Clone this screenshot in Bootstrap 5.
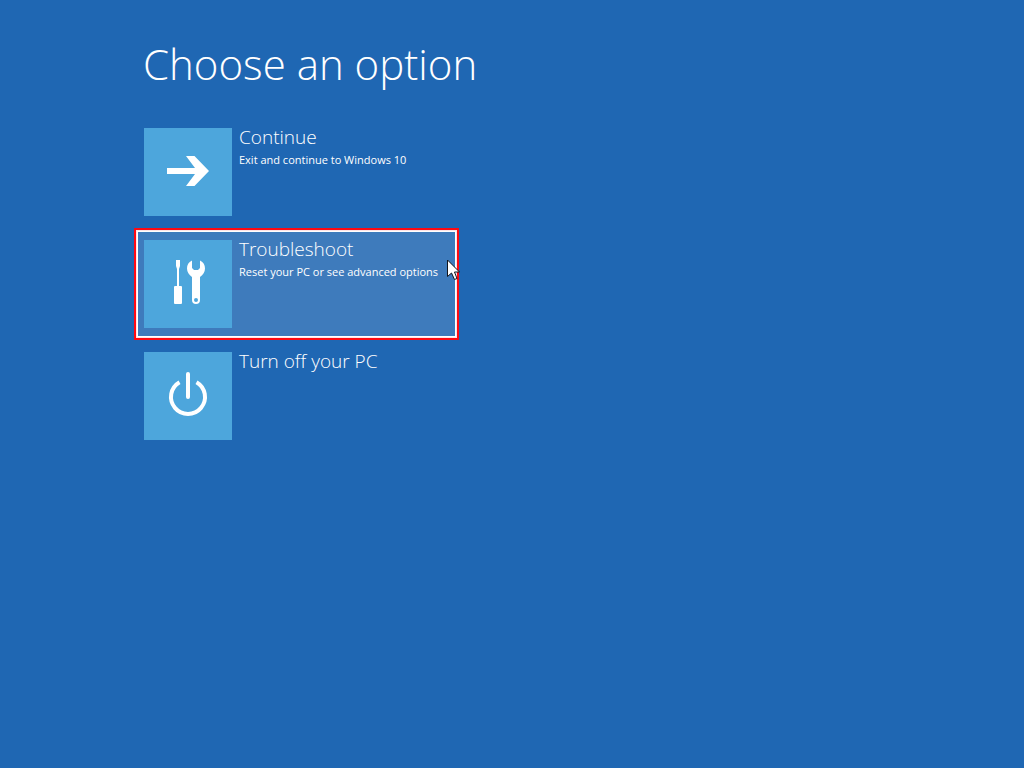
<!DOCTYPE html>
<html lang="en">
<head>
<meta charset="utf-8">
<meta name="viewport" content="width=device-width, initial-scale=1">
<title>Choose an option</title>
<link href="https://cdn.jsdelivr.net/npm/bootstrap@5.3.0/dist/css/bootstrap.min.css" rel="stylesheet">
<style>
body { background: #1f67b3; color: #fff; font-family: "Open Sans", "Noto Sans", sans-serif; }
.recovery { padding: 36px 24px 36px 134px; }
.recovery h1 { font-size: 42px; line-height: 56px; font-weight: 300; margin: 0 0 24px 9px; }
.options { max-width: 325px; }
.option { color: #fff; border: 2px solid transparent; padding: 10px 8px; height: 112px; background: none; }
.option.selected { background: #3e7bbc; border-color: #ff0a12; box-shadow: inset 0 0 0 1px #ffe4e6, inset 0 0 0 2px #fff; }
.tile { width: 88px; height: 88px; background: #4da6dc; }
.tile svg { display: block; }
.option-text { padding-left: 7px; }
.option-title { font-size: 19px; line-height: 18px; font-weight: 300; }
.option-note { font-size: 11px; line-height: 16px; margin-top: 6px; }
.pointer { left: 313px; top: 31px; }
</style>
</head>
<body>
<main class="recovery">
  <h1>Choose an option</h1>
  <div class="options d-flex flex-column">
    <button type="button" class="option d-flex w-100 text-start">
      <span class="tile flex-shrink-0"><svg width="88" height="88" viewBox="0 0 88 88" fill="#fff" aria-hidden="true"><path d="M23 40H51L42 28H50.500L65 43L50.500 58H42L51 46H23Z"/></svg></span>
      <span class="option-text text-nowrap"><span class="option-title d-block">Continue</span><span class="option-note d-block">Exit and continue to Windows 10</span></span>
    </button>
    <div class="position-relative">
      <button type="button" class="option selected d-flex w-100 text-start">
        <span class="tile flex-shrink-0"><svg width="88" height="88" viewBox="0 0 88 88" fill="#fff" aria-hidden="true"><path d="M32 20H36V26L35 29V46H37Q38 46 38 47V63Q38 64 37 64H31Q30 64 30 63V47Q30 46 31 46H33V29L32 26Z"/><path fill-rule="evenodd" d="M48 20.500V28L50 30H54L56 28V20.500C59.500 22 61 25 61 28.500C61 32 59 35 56 37V60A4 4 0 0 1 48 60V37C45 35 43 32 43 28.500C43 25 44.500 22 48 20.500ZM52 58A2 2 0 1 0 52 62A2 2 0 1 0 52 58Z"/></svg></span>
        <span class="option-text text-nowrap"><span class="option-title d-block">Troubleshoot</span><span class="option-note d-block">Reset your PC or see advanced options</span></span>
      </button>
      <svg class="pointer position-absolute" width="14" height="23" viewBox="0 0 14 23" aria-hidden="true"><path d="M.5 1V17.500L4.500 14L7.500 20.500L10 19.500L7.500 13H12.500Z" fill="#fff" stroke="#10151c"/></svg>
    </div>
    <button type="button" class="option d-flex w-100 text-start">
      <span class="tile flex-shrink-0"><svg width="88" height="88" viewBox="0 0 88 88" fill="none" stroke="#fff" stroke-width="4" aria-hidden="true"><path d="M44 22V45" stroke-linecap="round"/><path d="M35.500 30.200A17 17 0 1 0 52.500 30.200"/></svg></span>
      <span class="option-text text-nowrap"><span class="option-title d-block">Turn off your PC</span></span>
    </button>
  </div>
</main>
<script src="https://cdn.jsdelivr.net/npm/bootstrap@5.3.0/dist/js/bootstrap.bundle.min.js"></script>
</body>
</html>
